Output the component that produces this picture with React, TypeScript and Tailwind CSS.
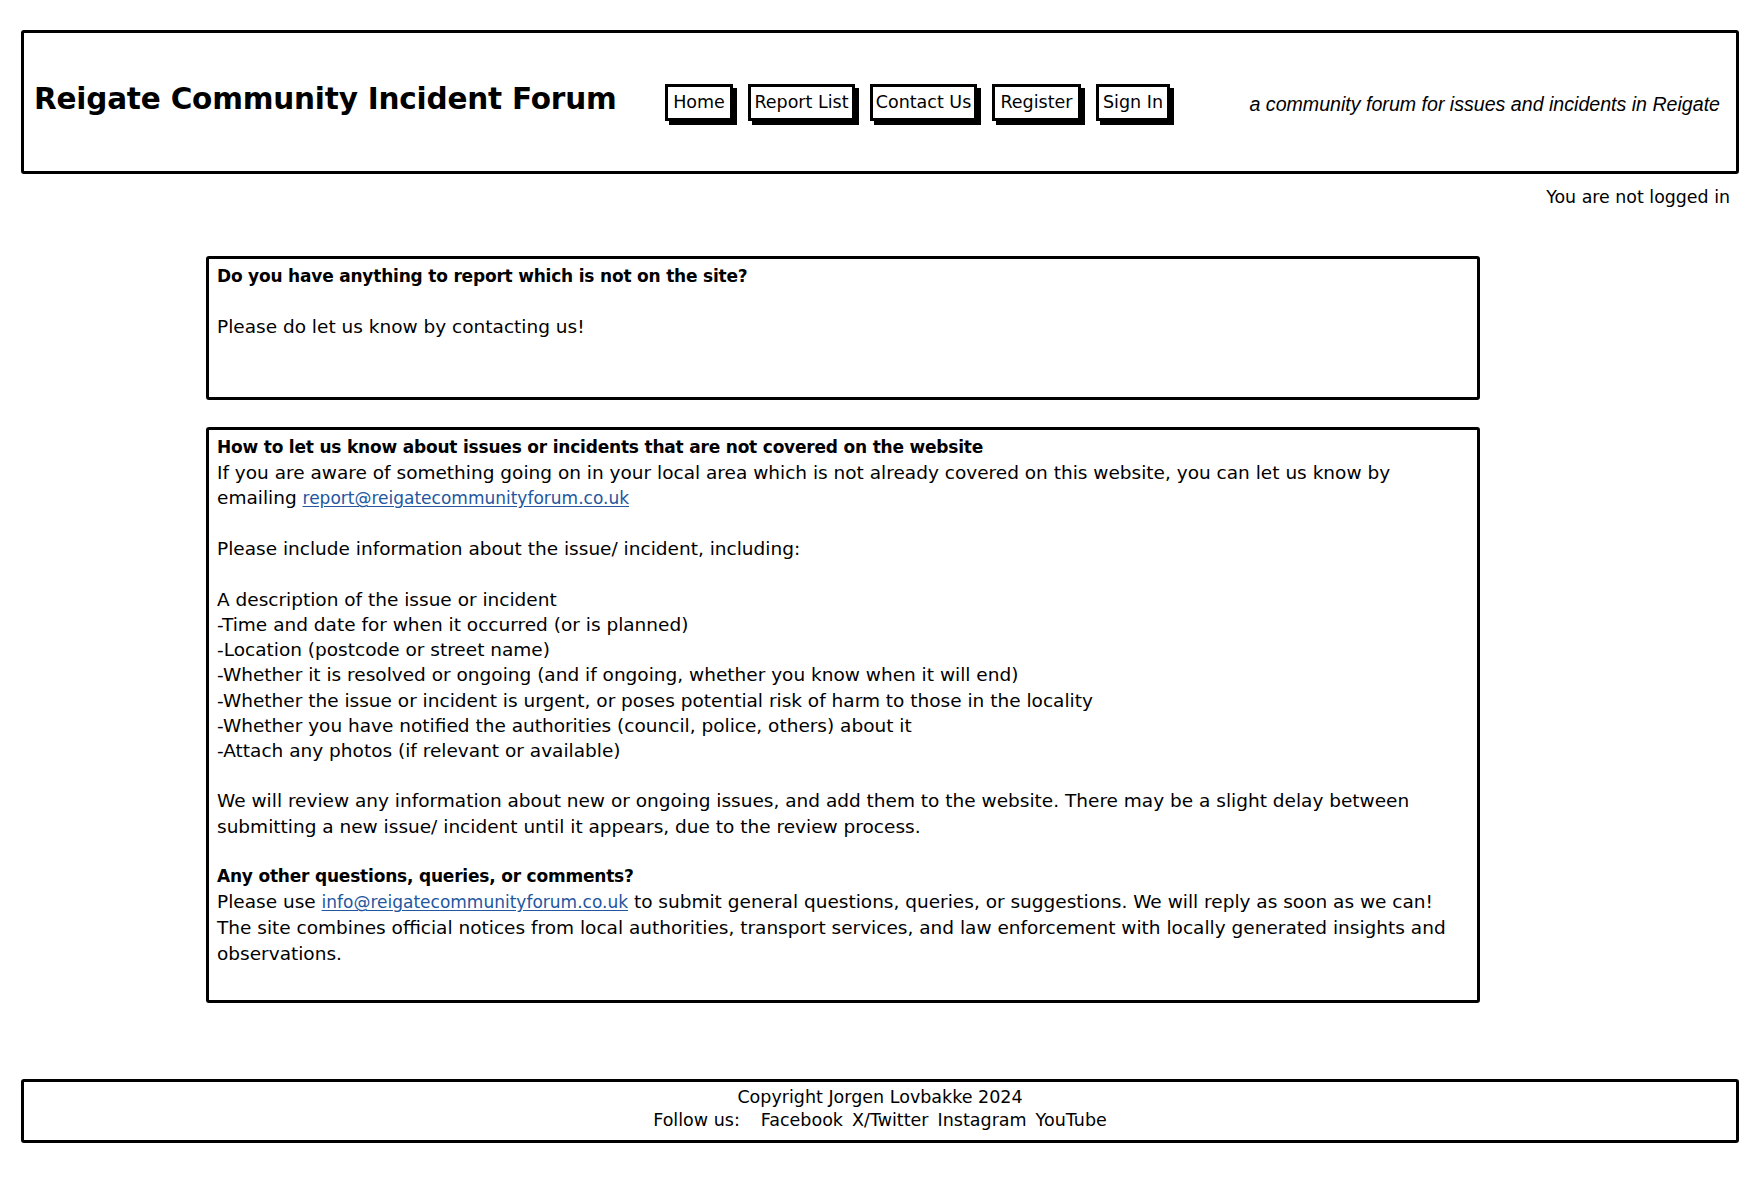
const sans = { fontFamily: '"DejaVu Sans", "Liberation Sans", sans-serif' };

const navItems = [
  { label: "Home", w: "w-[68px]" },
  { label: "Report List", w: "w-[107px]" },
  { label: "Contact Us", w: "w-[107px]" },
  { label: "Register", w: "w-[89px]" },
  { label: "Sign In", w: "w-[74px]" },
];

const details = [
  "A description of the issue or incident",
  "-Time and date for when it occurred (or is planned)",
  "-Location (postcode or street name)",
  "-Whether it is resolved or ongoing (and if ongoing, whether you know when it will end)",
  "-Whether the issue or incident is urgent, or poses potential risk of harm to those in the locality",
  "-Whether you have notified the authorities (council, police, others) about it",
  "-Attach any photos (if relevant or available)",
];

function Heading({ children }: { children: React.ReactNode }) {
  return <p className="font-bold text-[17px] tracking-[-0.2px]">{children}</p>;
}

function Blank() {
  return <div className="h-[25.2px]" />;
}

function MailLink({ addr }: { addr: string }) {
  return (
    <a href={`mailto:${addr}`} className="text-[#22569f] underline underline-offset-2 text-[17px]">
      {addr}
    </a>
  );
}

export default function App() {
  return (
    <div className="min-h-[1189px] bg-white text-black" style={sans}>
      {/* Header */}
      <header className="ml-[21px] mr-[23px] mt-[30px] h-[144px] border-[3px] border-black rounded-[3px] flex items-center pl-[10px] pr-[16px]">
        <div className="w-[631px] shrink-0 pb-[5px]">
          <h1 className="font-bold text-[29.5px] leading-none whitespace-nowrap tracking-[-0.2px]">Reigate Community Incident Forum</h1>
        </div>
        <nav className="flex items-center gap-[15px]">
          {navItems.map((n) => (
            <a
              key={n.label}
              href="#"
              className={`${n.w} h-[37px] flex items-center justify-center border-[3px] border-black bg-white shadow-[4px_4px_0_#000] text-[17.5px] whitespace-nowrap`}
            >
              {n.label}
            </a>
          ))}
        </nav>
        <p
          className="ml-auto italic text-[19.6px] whitespace-nowrap pt-[5px]"
          style={{ fontFamily: '"Liberation Sans", Arial, sans-serif' }}
        >
          a community forum for issues and incidents in Reigate
        </p>
      </header>

      <div className="flex justify-end pr-[32px] mt-[11px] text-[17.4px] leading-[24px]">You are not logged in</div>

      {/* Main */}
      <main className="ml-[206px] w-[1274px] mt-[47px] flex flex-col gap-[27px] text-[18.5px] leading-[25.2px]">
        <section className="border-[3px] border-black rounded-[3px] pl-[8px] pr-[8px] pt-[5px] pb-[57px]">
          <Heading>Do you have anything to report which is not on the site?</Heading>
          <Blank />
          <p>Please do let us know by contacting us!</p>
        </section>

        <section className="border-[3px] border-black rounded-[3px] pl-[8px] pr-[6px] pt-[5px] pb-[34px] whitespace-nowrap">
          <Heading>How to let us know about issues or incidents that are not covered on the website</Heading>
          <p>
            If you are aware of something going on in your local area which is not already covered on this website, you can let us know by
            <br />
            emailing <MailLink addr="report@reigatecommunityforum.co.uk" />
          </p>
          <Blank />
          <p>Please include information about the issue/ incident, including:</p>
          <Blank />
          <ul>
            {details.map((d) => (
              <li key={d}>{d}</li>
            ))}
          </ul>
          <Blank />
          <p>
            We will review any information about new or ongoing issues, and add them to the website. There may be a slight delay between
            <br />
            submitting a new issue/ incident until it appears, due to the review process.
          </p>
          <Blank />
          <Heading>Any other questions, queries, or comments?</Heading>
          <p>
            Please use <MailLink addr="info@reigatecommunityforum.co.uk" /> to submit general questions, queries, or suggestions. We will reply as soon as we can!
          </p>
          <p>
            The site combines official notices from local authorities, transport services, and law enforcement with locally generated insights and
            <br />
            observations.
          </p>
        </section>
      </main>

      {/* Footer */}
      <footer className="ml-[21px] mr-[23px] mt-[76px] h-[64px] border-[3px] border-black rounded-[3px] flex flex-col items-center pt-[4px] text-[17.5px] leading-[23px]">
        <p>Copyright Jorgen Lovbakke 2024</p>
        <div className="flex items-center">
          <span className="mr-[21px]">Follow us:</span>
          <div className="flex gap-[9px]">
            <a href="#">Facebook</a>
            <a href="#">X/Twitter</a>
            <a href="#">Instagram</a>
            <a href="#">YouTube</a>
          </div>
        </div>
      </footer>
    </div>
  );
}
